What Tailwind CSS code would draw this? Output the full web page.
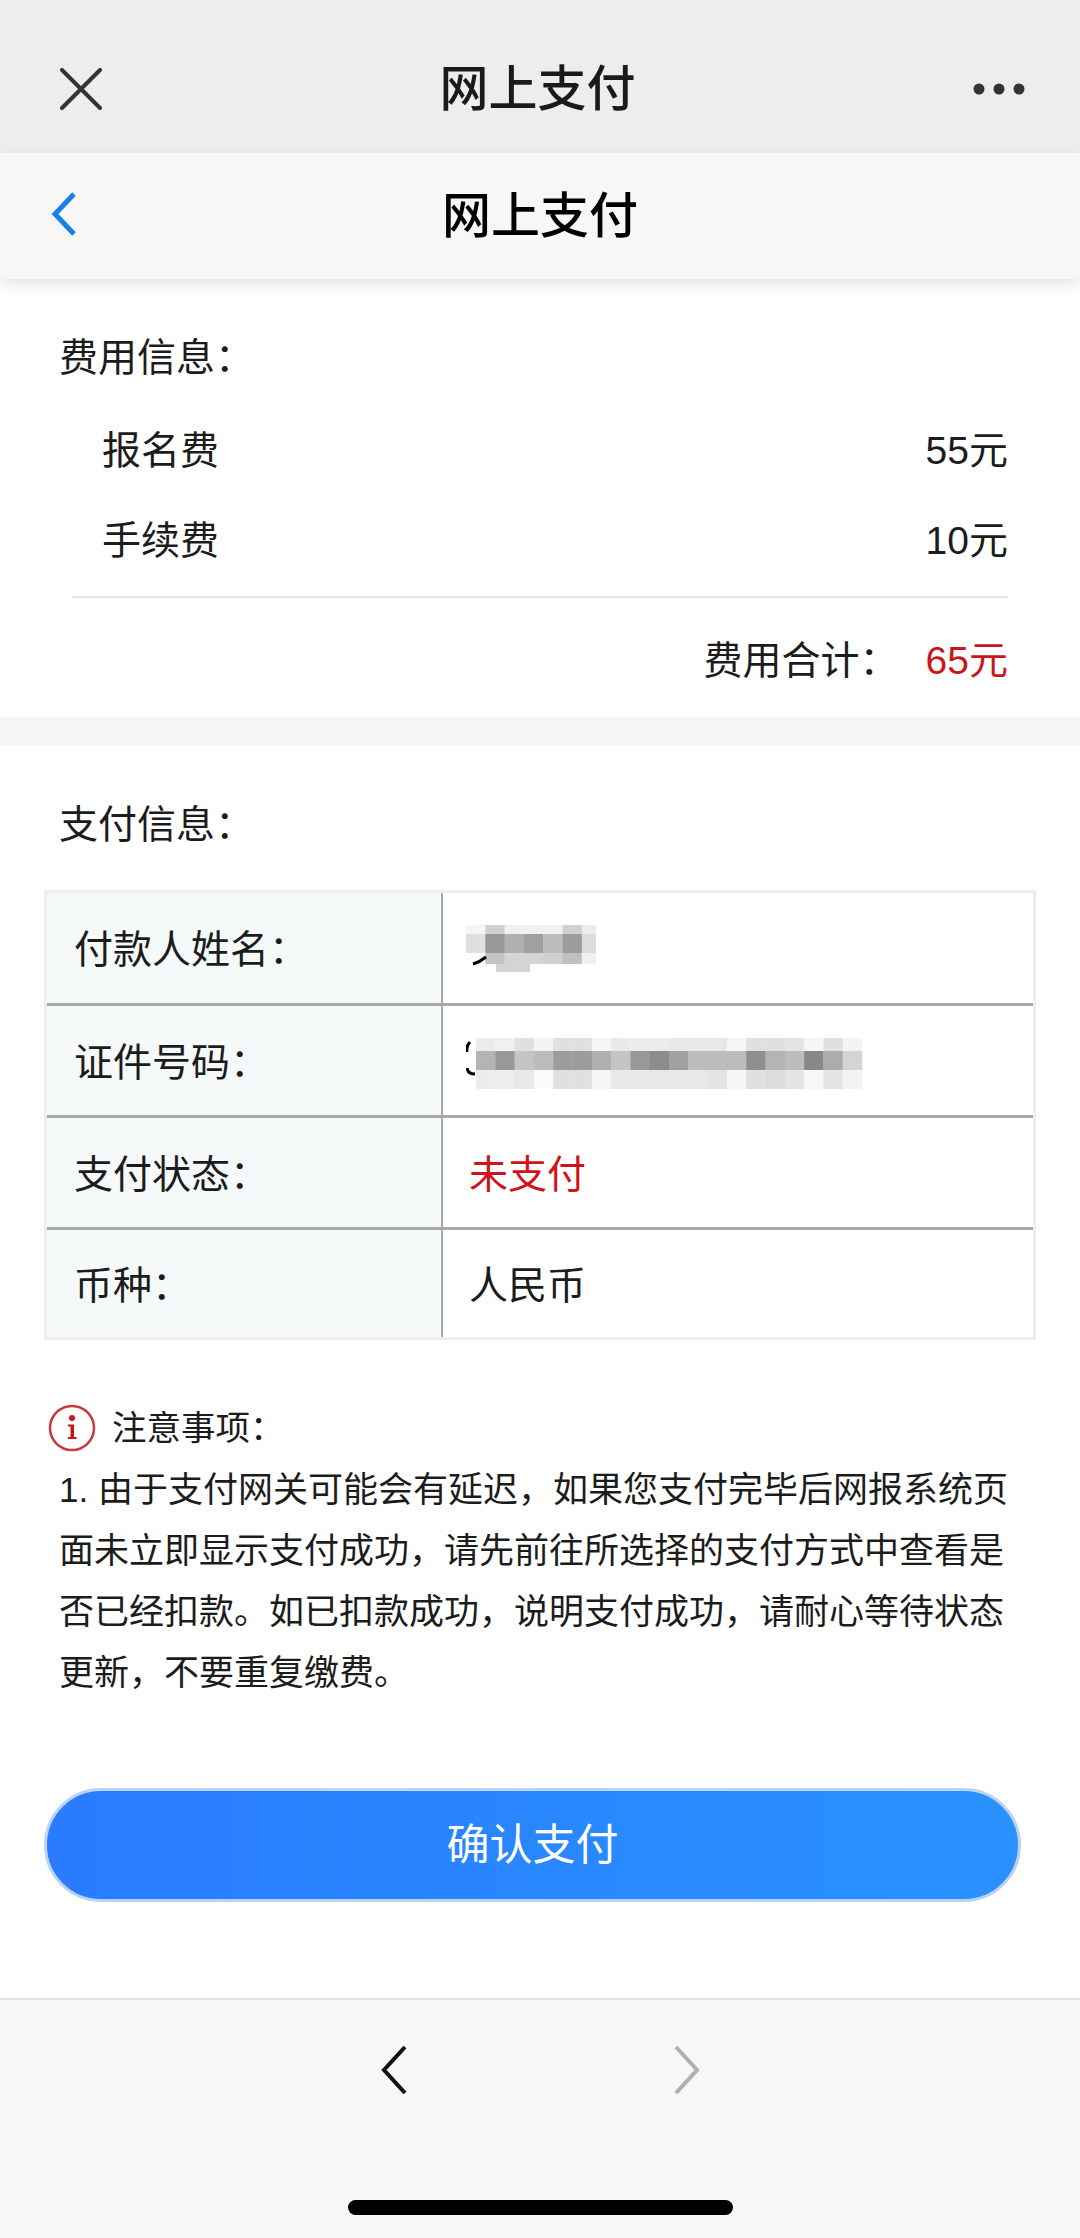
<!DOCTYPE html>
<html lang="zh-CN">

<head>
    <meta charset="UTF-8">
    <meta name="viewport" content="width=device-width, initial-scale=1.0">
    <title>网上支付</title>
    <script src="https://cdn.jsdelivr.net/npm/@tailwindcss/browser@4"></script>
</head>

<body class="w-[1080px] h-[2238px] overflow-hidden bg-white text-[#1c1c1c] font-['Liberation_Sans','Noto_Sans_CJK_SC',sans-serif]">
    <!-- wechat bar -->
    <div class="h-[153px] bg-[#ededed] flex items-center justify-between pt-[24px] pl-[60px] pr-[55px]">
        <svg class="w-[42px] h-[42px]" viewBox="0 0 42 42" fill="none" stroke="#333" stroke-width="4" stroke-linecap="round">
            <path d="M2 2 L40 40 M40 2 L2 40" />
        </svg>
        <div class="text-[49px] leading-[60px] font-medium text-[#1a1a1a]">网上支付</div>
        <svg class="w-[52px] h-[12px]" viewBox="0 0 52 12" fill="#333">
            <circle cx="6" cy="6" r="5.5" />
            <circle cx="26" cy="6" r="5.5" />
            <circle cx="46" cy="6" r="5.5" />
        </svg>
    </div>

    <!-- page nav -->
    <div class="relative z-10 h-[126px] bg-[#f7f7f7] flex items-center justify-center shadow-[0_6px_14px_rgba(0,0,0,0.10)]">
        <svg class="absolute left-[50px] top-[38px] w-[28px] h-[46px]" viewBox="0 0 28 46" fill="none" stroke="#1a7fe8" stroke-width="5">
            <path d="M24 3 L5 23 L24 43" />
        </svg>
        <div class="text-[49px] leading-[60px] font-medium text-black">网上支付</div>
    </div>

    <!-- fee info -->
    <section class="h-[438px] pt-[54px]">
        <div class="pl-[59px] text-[39px] leading-[50px]">费用信息：</div>
        <div class="mt-[23px] pl-[102px] pr-[72px] text-[39px]">
            <div class="h-[90px] flex items-center justify-between"><span>报名费</span><span>55元</span></div>
            <div class="h-[90px] flex items-center justify-between"><span>手续费</span><span>10元</span></div>
        </div>
        <div class="mt-[10px] ml-[72px] w-[936px] h-[2px] bg-[#e8e8e8]"></div>
        <div class="mt-[24px] pr-[72px] h-[78px] flex items-center justify-end text-[39px]">
            <span>费用合计：</span><span class="ml-[27px] text-[#c8161d]">65元</span>
        </div>
    </section>

    <div class="h-[28px] bg-[#f5f5f5]"></div>

    <!-- pay info -->
    <section class="pt-[55px]">
        <div class="pl-[59px] text-[39px] leading-[50px]">支付信息：</div>
        <div class="mt-[40px] ml-[44px] w-[992px] h-[450px] border-[3px] border-[#eeeeee] grid grid-cols-[396px_1fr] grid-rows-[113px_112px_112px_1fr] text-[39px]">
            <div class="bg-[#f5f9fa] flex items-center pt-[5px] pl-[27px] border-r-[2px] border-b-[3px] border-r-[#a8a8a8] border-b-[#a8a8a8]">付款人姓名：</div>
            <div class="flex items-center pl-[23px] border-b-[3px] border-[#a8a8a8]">
                <svg id="nameMosaic" class="mt-[2px]" width="130" height="48" viewBox="0 0 130 48"></svg>
            </div>
            <div class="bg-[#f5f9fa] flex items-center pt-[5px] pl-[27px] border-r-[2px] border-b-[3px] border-r-[#a8a8a8] border-b-[#a8a8a8]">证件号码：</div>
            <div class="flex items-center pl-[23px] border-b-[3px] border-[#a8a8a8]">
                <svg id="idMosaic" class="mt-[6px]" width="400" height="52" viewBox="0 0 400 52"></svg>
            </div>
            <div class="bg-[#f5f9fa] flex items-center pt-[5px] pl-[27px] border-r-[2px] border-b-[3px] border-r-[#a8a8a8] border-b-[#a8a8a8]">支付状态：</div>
            <div class="flex items-center pt-[5px] pl-[26px] border-b-[3px] border-[#a8a8a8] text-[#d0121b]">未支付</div>
            <div class="bg-[#f5f9fa] flex items-center pt-[5px] pl-[27px] border-r-[2px] border-r-[#a8a8a8]">币种：</div>
            <div class="flex items-center pt-[5px] pl-[26px]">人民币</div>
        </div>
    </section>

    <!-- notes -->
    <section class="mt-[63px] pl-[59px] pr-[66px]">
        <div class="flex items-center h-[50px] -ml-[11px]">
            <svg class="w-[48px] h-[48px]" viewBox="0 0 48 48">
                <circle cx="24" cy="24" r="22" fill="none" stroke="#c8393b" stroke-width="2.5" />
                <circle cx="24" cy="14" r="3" fill="#c8161d" />
                <path d="M20 20.5 H26 V33 H28.5 V35 H20 V33 H22.5 V22.5 H20 Z" fill="#c8161d" />
            </svg>
            <span class="ml-[16px] text-[34.5px] leading-[50px]">注意事项：</span>
        </div>
        <p class="mt-[6px] text-[35px] leading-[61px]">1. 由于支付网关可能会有延迟，如果您支付完毕后网报系统页面未立即显示支付成功，请先前往所选择的支付方式中查看是否已经扣款。如已扣款成功，说明支付成功，请耐心等待状态更新，不要重复缴费。</p>
    </section>

    <!-- confirm -->
    <button class="block mt-[85px] ml-[44px] w-[977px] h-[114px] rounded-full border-[3px] border-[#b9d3f2] bg-gradient-to-r from-[#2a7bff] to-[#2992ff] text-white text-[43px]">确认支付</button>

    <!-- browser toolbar -->
    <div class="fixed left-0 bottom-0 w-[1080px] h-[240px] bg-[#f7f7f7] border-t-[2px] border-[#e4e4e4]">
        <div class="mt-[46px] flex justify-center gap-[267px]">
            <svg class="w-[26px] h-[48px]" viewBox="0 0 26 48" fill="none" stroke="#111" stroke-width="4">
                <path d="M24 1 L3 24 L24 47" />
            </svg>
            <svg class="w-[26px] h-[48px]" viewBox="0 0 26 48" fill="none" stroke="#b0b0b0" stroke-width="4">
                <path d="M2 1 L23 24 L2 47" />
            </svg>
        </div>
        <div class="mt-[106px] ml-[348px] w-[385px] h-[15px] rounded-full bg-black"></div>
    </div>

    <script>
        // blurred cells, colours read off the screenshot
        const nameRows = [
            [0, 9, ['f5f5f5', 'd0d0d0', 'f0f0f0', 'f0f0f0', 'f0f0f0', 'd0d0d0', 'ececec']],
            [9, 19, ['e0e0e0', '999999', 'b0b0b0', 'a0a0a0', 'bcbcbc', '9c9c9c', 'dcdcdc']],
            [28, 11, ['ffffff', 'c4c4c4', 'd4d4d4', 'd4d4d4', 'cfcfcf', 'c0c0c0', 'f0f0f0']]
        ];
        const idRows = [
            [0, 13, ['ececec', 'f0f0f0', 'e0e0e0', 'f4f4f4', 'e0e0e0', 'e0e0e0', 'f6f6f6', 'eaeaea', 'ececec', 'ececec', 'e8e8e8', 'e8e8e8', 'e8e8e8', 'f6f6f6', 'e0e0e0', 'e0e0e0', 'e4e4e4', 'f6f6f6', 'e0e0e0', 'f4f4f4']],
            [13, 19, ['b4b4b4', '989898', 'c4c4c4', 'bcbcbc', '9c9c9c', '9c9c9c', 'b0b0b0', 'c4c4c4', '989898', '8c8c8c', 'a0a0a0', 'bcbcbc', 'bcbcbc', 'bcbcbc', '8e8e8e', 'b4b4b4', 'bcbcbc', '888888', 'acacac', 'd4d4d4']],
            [32, 19, ['ececec', 'eeeeee', 'e8e8e8', 'fafafa', 'e0e0e0', 'e0e0e0', 'f6f6f6', 'e8e8e8', 'e8e8e8', 'e8e8e8', 'e8e8e8', 'e8e8e8', 'e4e4e4', 'f6f6f6', 'e0e0e0', 'dcdcdc', 'e4e4e4', 'f8f8f8', 'e4e4e4', 'f4f4f4']]
        ];

        function drawMosaic(id, rows, startX, extra) {
            const svg = document.getElementById(id);
            let html = '';
            rows.forEach(([y, h, colours]) => {
                colours.forEach((c, i) => {
                    html += `<rect x="${startX + i * 19.3}" y="${y}" width="19.6" height="${h}" fill="#${c}"/>`;
                });
            });
            svg.innerHTML = html + extra;
        }

        drawMosaic('nameMosaic', nameRows, 0,
            '<rect x="30" y="39" width="34" height="8" fill="#d4d4d4"/><path d="M7 39 Q14 37 20 32" fill="none" stroke="#000" stroke-width="3"/>');
        drawMosaic('idMosaic', idRows, 10,
            '<path d="M4 4 Q0 8 1 14 M1 30 Q2 36 9 36" fill="none" stroke="#000" stroke-width="3"/>');
    </script>
</body>

</html>
